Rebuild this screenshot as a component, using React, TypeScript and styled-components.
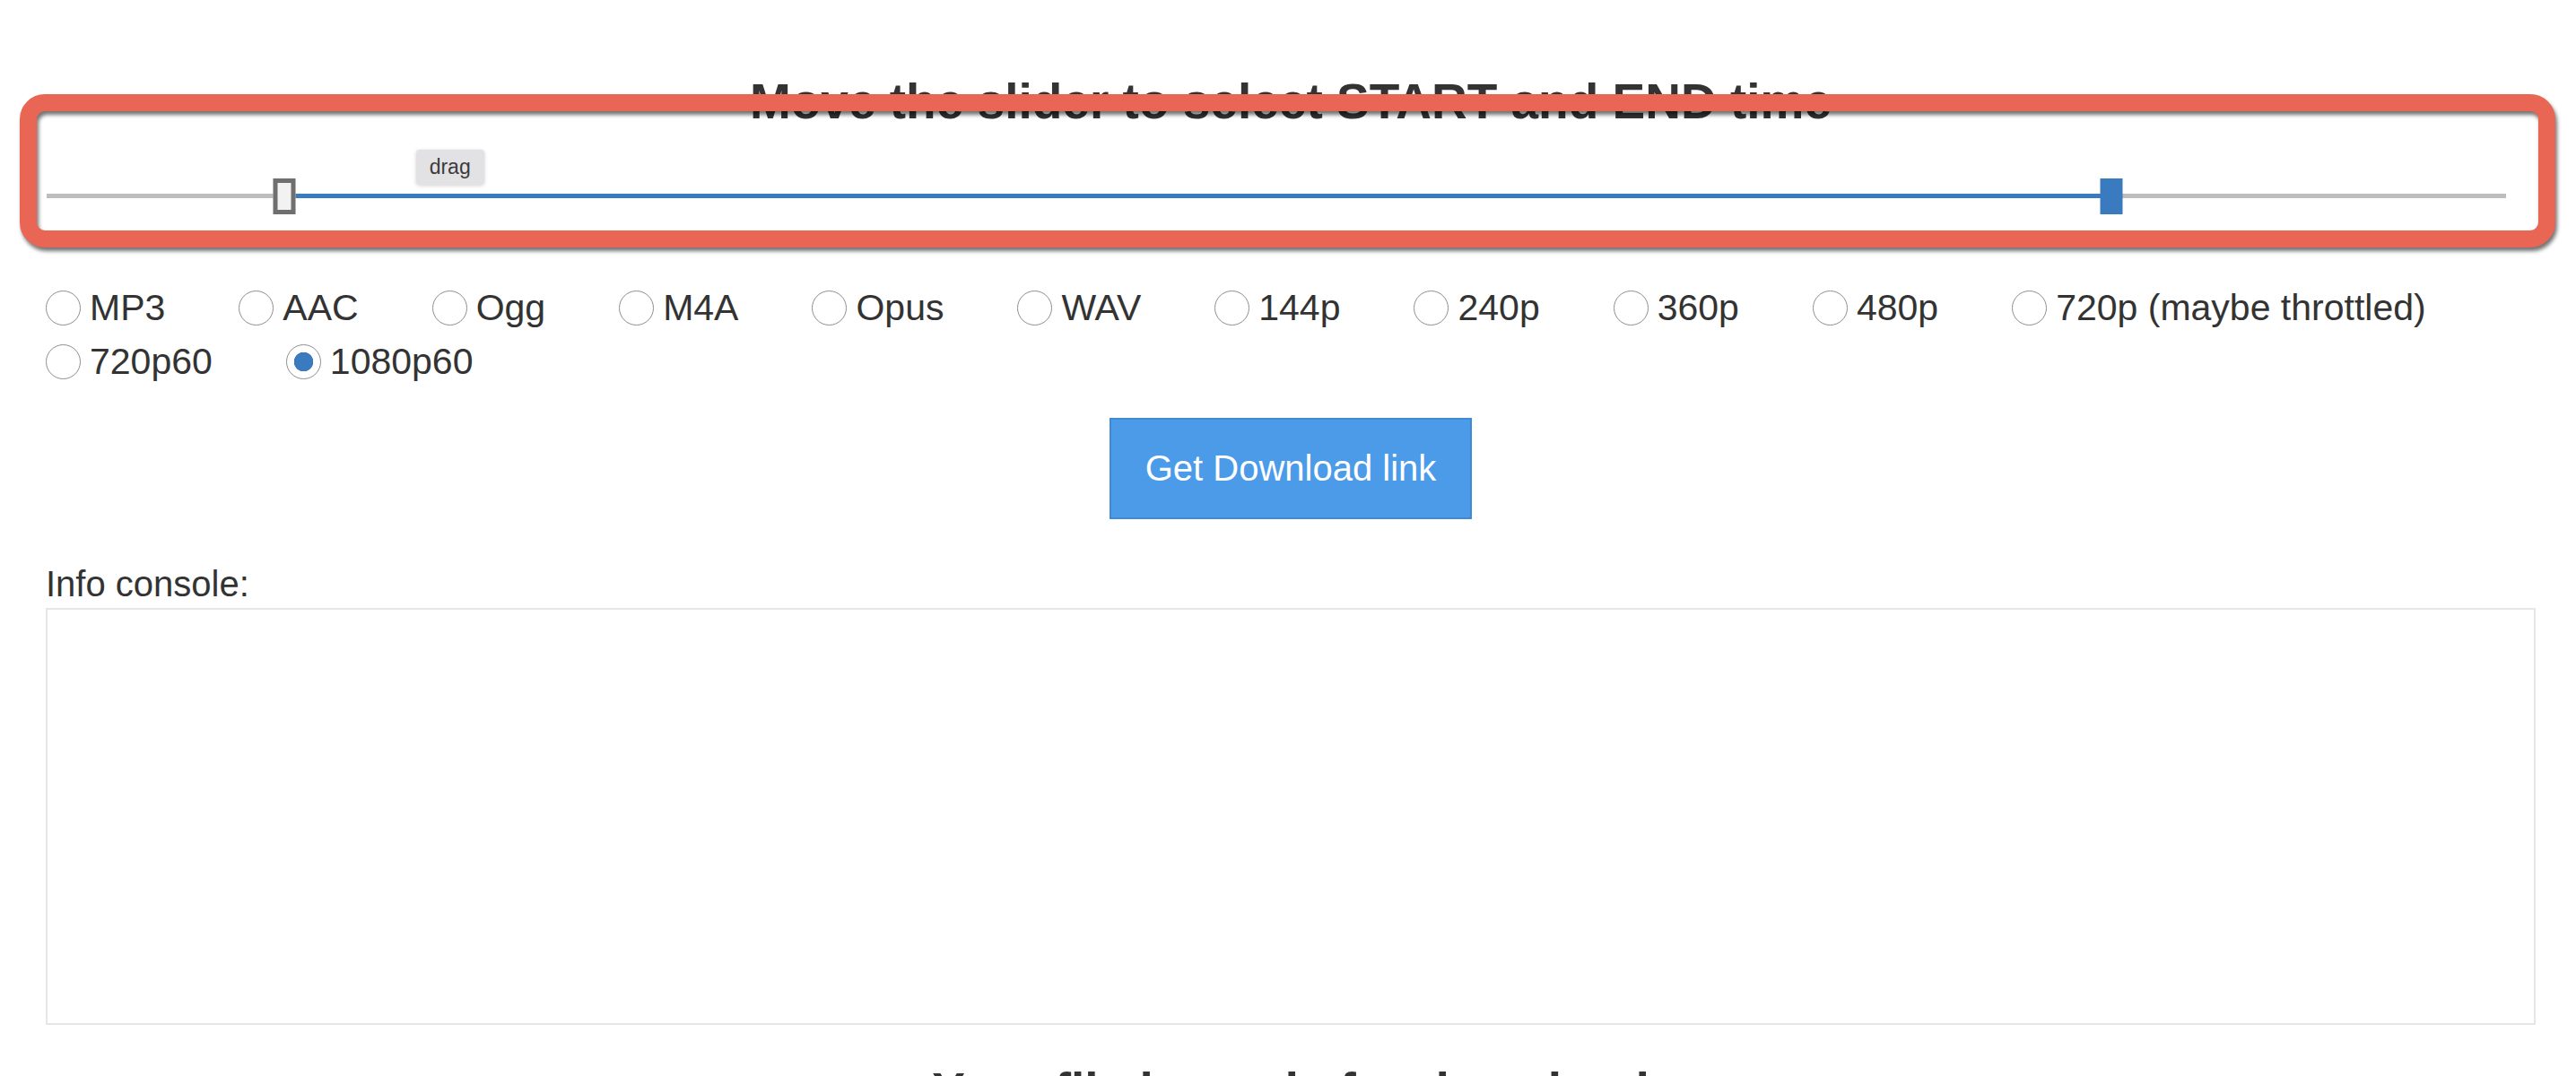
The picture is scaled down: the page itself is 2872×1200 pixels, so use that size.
import React from "react";
import styled, { createGlobalStyle } from "styled-components";

const GlobalStyle = createGlobalStyle`
  html, body {
    margin: 0;
    padding: 0;
    background: #ffffff;
  }
  body {
    font-family: "Liberation Sans", Arial, Helvetica, sans-serif;
    color: #333333;
  }
`;

const Page = styled.div`
  position: relative;
  display: flex;
  flex-direction: column;
  padding: 80px 45px 0 51px;
  width: 2872px;
  box-sizing: border-box;
`;

const Heading = styled.h3`
  margin: 0;
  font-size: 55px;
  line-height: 66px;
  font-weight: 700;
  text-align: center;
  color: #333333;
`;

const Slider = styled.div`
  padding: 70px 33px 92px 1px;
`;

const Track = styled.div`
  position: relative;
  height: 5px;
  background: #bdbdbd;
`;

const Range = styled.div`
  position: absolute;
  top: 0;
  height: 100%;
  background: #3a7bbf;
`;

const Handle = styled.div<{ $active?: boolean }>`
  position: absolute;
  top: -17px;
  width: 25px;
  height: 40px;
  box-sizing: border-box;
  transform: translateX(-50%);
  background: ${(p) => (p.$active ? "#3a7bbf" : "#f2f2f2")};
  border: ${(p) => (p.$active ? "none" : "5px solid #6f6f6f")};
`;

const Tip = styled.div`
  position: absolute;
  top: -49px;
  transform: translateX(-50%);
  width: 76px;
  height: 39px;
  box-sizing: border-box;
  display: flex;
  align-items: center;
  justify-content: center;
  background: #e2e2e4;
  border-radius: 4px;
  box-shadow: 0 1px 4px rgba(0, 0, 0, 0.18);
  font-size: 23px;
  color: #3c3c3c;
`;

const Annotation = styled.div`
  position: absolute;
  left: 22px;
  top: 105px;
  width: 2827px;
  height: 171px;
  box-sizing: border-box;
  border: 19px solid #e96655;
  border-radius: 28px;
  filter: drop-shadow(2px 4px 2px rgba(0, 0, 0, 0.55));
  pointer-events: none;
`;

const Options = styled.div`
  display: flex;
  flex-wrap: wrap;
  column-gap: 82px;
  font-size: 41px;
  line-height: 60px;
`;

const Option = styled.label`
  display: inline-flex;
  align-items: center;
  gap: 10px;
  color: #333333;
`;

const Radio = styled.input`
  appearance: none;
  -webkit-appearance: none;
  width: 39px;
  height: 39px;
  margin: 0;
  box-sizing: border-box;
  border-radius: 50%;
  border: 1.5px solid #8f8f8f;
  background: #ffffff;
  &:checked {
    background: radial-gradient(circle, #3a7bbf 0 10.5px, #ffffff 11px);
  }
`;

const ButtonRow = styled.div`
  display: flex;
  justify-content: center;
  margin-top: 33px;
`;

const Button = styled.button`
  height: 113px;
  padding: 0 38px;
  border: 2px solid #3f89d5;
  background: #4b9be9;
  color: #ffffff;
  font-family: "Liberation Sans", Arial, Helvetica, sans-serif;
  font-size: 40px;
  border-radius: 0;
`;

const ConsoleSection = styled.section`
  display: flex;
  flex-direction: column;
  gap: 2px;
  margin-top: 47px;
`;

const ConsoleLabel = styled.div`
  font-size: 40px;
  line-height: 50px;
`;

const ConsoleBox = styled.div`
  height: 465px;
  box-sizing: border-box;
  border: 2px solid #e6e6ea;
  background: #ffffff;
`;

const ReadyHeading = styled(Heading)`
  margin-top: 40px;
`;

const formats = [
  "MP3",
  "AAC",
  "Ogg",
  "M4A",
  "Opus",
  "WAV",
  "144p",
  "240p",
  "360p",
  "480p",
  "720p (maybe throttled)",
  "720p60",
  "1080p60",
];

const startPct = 9.65;
const endPct = 83.97;
const tipPct = 16.4;

export default function App() {
  return (
    <>
      <GlobalStyle />
      <Page>
        <Heading>Move the slider to select START and END time</Heading>
        <Slider>
          <Track>
            <Range style={{ left: `${startPct}%`, width: `${endPct - startPct}%` }} />
            <Handle style={{ left: `${startPct}%` }} />
            <Handle $active style={{ left: `${endPct}%` }} />
            <Tip style={{ left: `${tipPct}%` }}>drag</Tip>
          </Track>
        </Slider>
        <Options>
          {formats.map((f) => (
            <Option key={f}>
              <Radio type="radio" name="format" defaultChecked={f === "1080p60"} />
              {f}
            </Option>
          ))}
        </Options>
        <ButtonRow>
          <Button type="button">Get Download link</Button>
        </ButtonRow>
        <ConsoleSection>
          <ConsoleLabel>Info console:</ConsoleLabel>
          <ConsoleBox />
        </ConsoleSection>
        <ReadyHeading>Your file is ready for download</ReadyHeading>
        <Annotation />
      </Page>
    </>
  );
}
